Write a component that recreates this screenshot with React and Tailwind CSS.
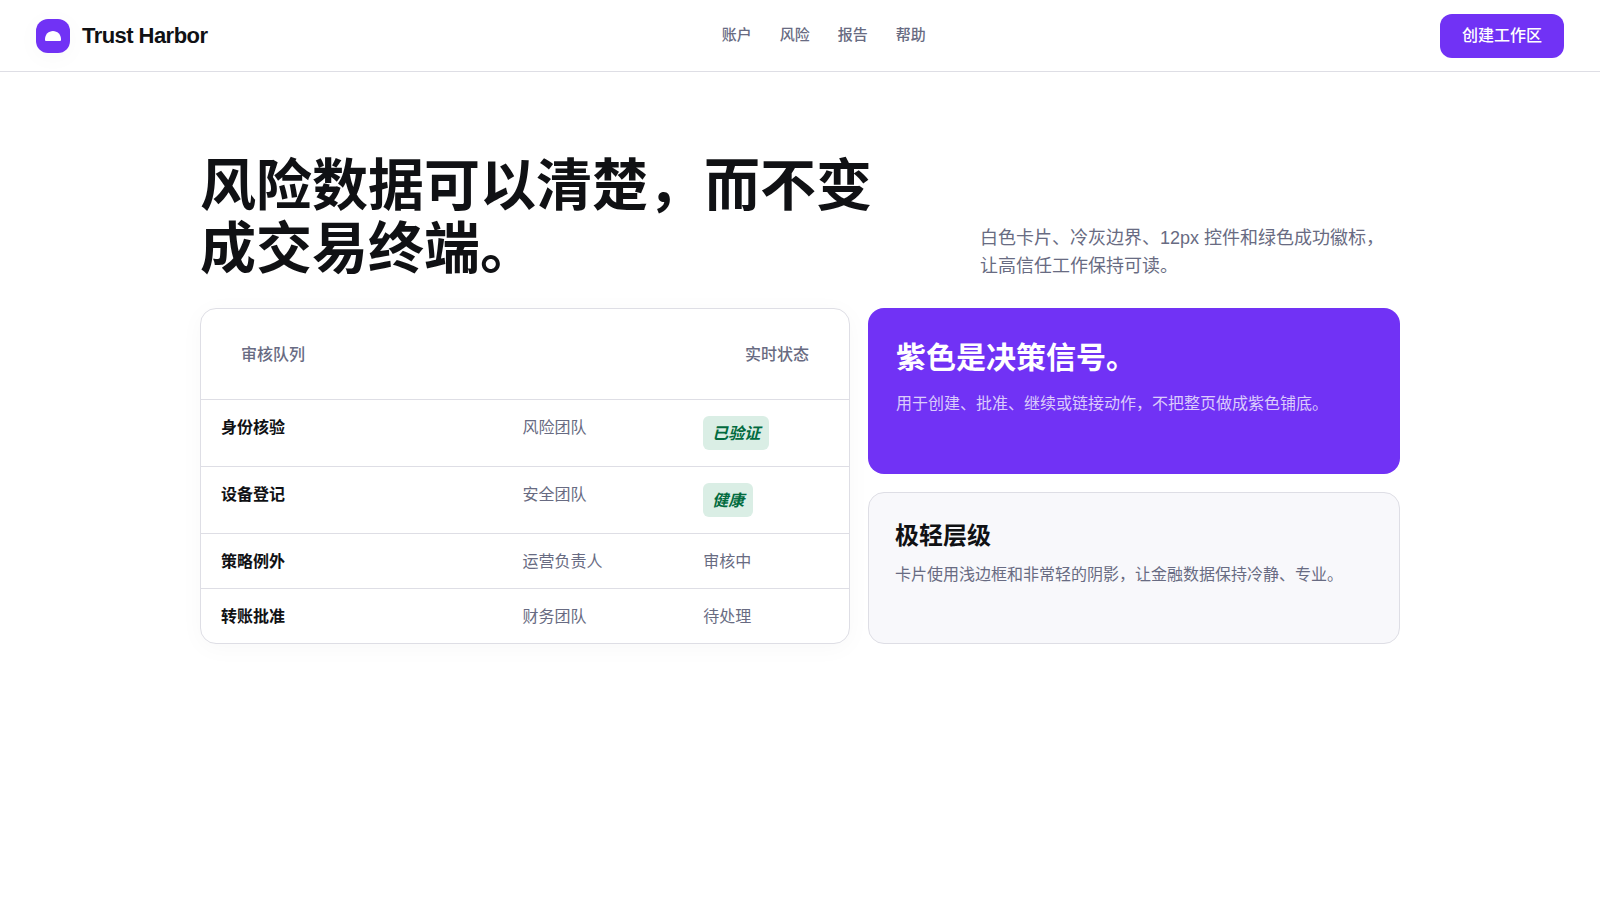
const navLinks = ['账户', '风险', '报告', '帮助']

const rows = [
  { name: '身份核验', team: '风险团队', status: '已验证', ok: true },
  { name: '设备登记', team: '安全团队', status: '健康', ok: true },
  { name: '策略例外', team: '运营负责人', status: '审核中' },
  { name: '转账批准', team: '财务团队', status: '待处理' },
]

function Header() {
  return (
    <header className="flex items-center justify-between px-9 h-18 border-b border-[#dedee5] bg-white">
      <a href="#" className="flex items-center gap-3 text-[22px] leading-7 font-bold tracking-tight">
        <span className="flex items-center justify-center w-[34px] h-[34px] rounded-xl bg-[#7132f5] shadow-[0_4px_24px_rgba(0,0,0,0.03)]">
          <svg viewBox="0 0 16 10" className="w-4 h-2.5" aria-hidden="true">
            <path d="M0 9V8C0 3.6 3.6 0 8 0s8 3.6 8 8v1a1 1 0 0 1-1 1H1a1 1 0 0 1-1-1Z" fill="#fff" />
          </svg>
        </span>
        Trust Harbor
      </a>
      <nav className="flex gap-7 text-[15px] font-medium text-[#686b82]">
        {navLinks.map((label) => (
          <a key={label} href="#">{label}</a>
        ))}
      </nav>
      <button className="h-11 px-[22px] rounded-xl bg-[#7132f5] text-white font-medium cursor-pointer">
        创建工作区
      </button>
    </header>
  )
}

function QueueTable() {
  return (
    <div className="rounded-2xl border border-[#dedee5] bg-white overflow-hidden shadow-[0_4px_24px_rgba(0,0,0,0.03)]">
      <table className="w-full table-fixed border-separate border-spacing-0 text-left leading-6 text-[#686b82]">
        <colgroup>
          <col className="w-[49.6%]" />
          <col className="w-[27.9%]" />
          <col />
        </colgroup>
        <thead>
          <tr>
            <th className="pt-[34px] pb-8 pl-10 font-medium">审核队列</th>
            <th colSpan={2} className="pt-[34px] pb-8 pr-10 font-medium text-right">实时状态</th>
          </tr>
        </thead>
        <tbody>
          {rows.map((row) => (
            <tr key={row.name} className="align-top">
              <th scope="row" className="pt-4 pb-3.5 pl-5 border-t border-[#dedee5] font-semibold text-[#101114]">{row.name}</th>
              <td className="pt-4 pb-3.5 border-t border-[#dedee5]">{row.team}</td>
              <td className="pt-4 pb-3.5 border-t border-[#dedee5]">
                {row.ok
                  ? <em className="block w-fit mb-0.5 px-[9px] pt-1.5 pb-1 rounded-md bg-[#daeee5] font-semibold text-[#026b3f]">{row.status}</em>
                  : row.status}
              </td>
            </tr>
          ))}
        </tbody>
      </table>
    </div>
  )
}

export default function App() {
  return (
    <div lang="zh-CN" className="min-h-screen bg-white text-base text-[#101114] font-['Liberation_Sans','Noto_Sans_CJK_SC',sans-serif]">
      <Header />
      <main className="max-w-[1200px] mx-auto pt-[82px] pb-20">
        <div className="flex items-end justify-between gap-16 mb-7">
          <h1 className="max-w-[700px] text-[56px] leading-[63px] font-bold">
            风险数据可以清楚，而不变成交易终端。
          </h1>
          <p className="w-[420px] shrink-0 text-lg leading-7 text-[#686b82]">
            白色卡片、冷灰边界、12px 控件和绿色成功徽标，让高信任工作保持可读。
          </p>
        </div>

        <div className="grid grid-cols-[1.1fr_0.9fr] gap-[18px]">
          <QueueTable />
          <div className="grid gap-[18px]">
            <section className="p-7 rounded-2xl bg-[#7132f5] text-white">
              <h2 className="mb-3 text-3xl leading-[44px] font-bold">紫色是决策信号。</h2>
              <p className="leading-6 text-white/75">用于创建、批准、继续或链接动作，不把整页做成紫色铺底。</p>
            </section>
            <section className="p-[26px] rounded-2xl border border-[#dedee5] bg-[#f8f8fb]">
              <h2 className="mb-2.5 text-2xl leading-[34px] font-bold">极轻层级</h2>
              <p className="leading-6 text-[#686b82]">卡片使用浅边框和非常轻的阴影，让金融数据保持冷静、专业。</p>
            </section>
          </div>
        </div>
      </main>
    </div>
  )
}
